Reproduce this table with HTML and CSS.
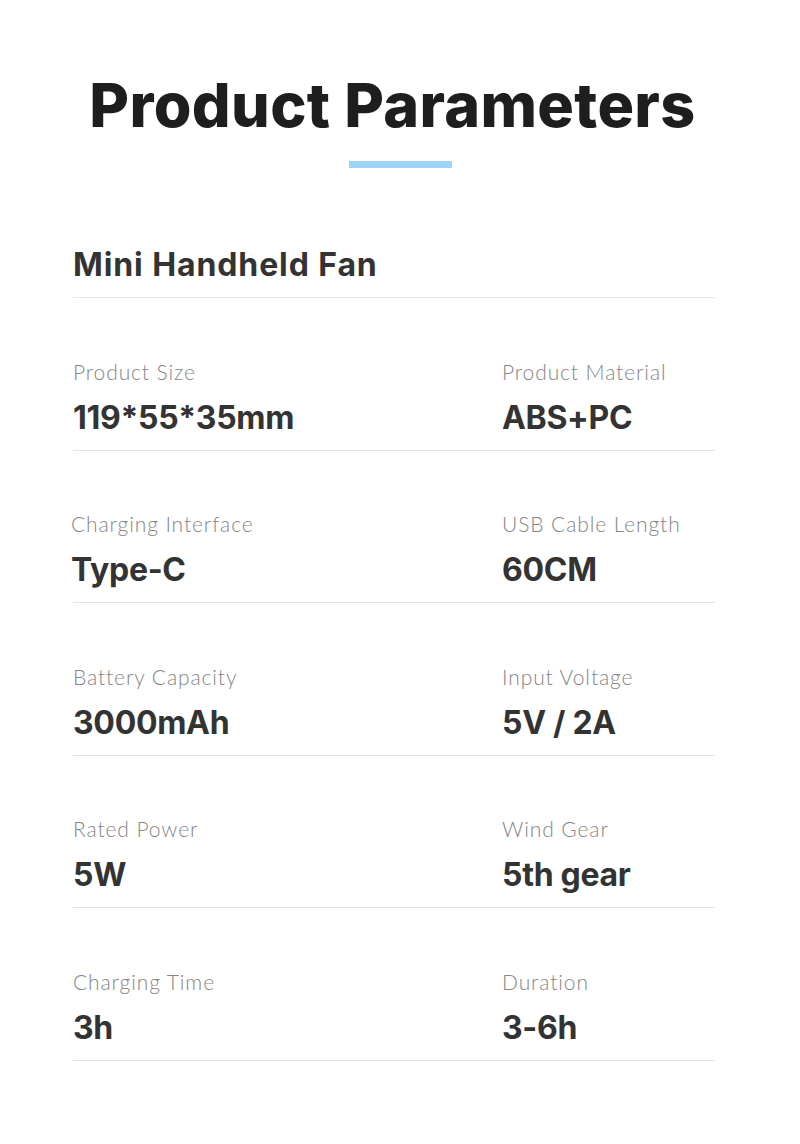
FILE: index.html
```html
<!DOCTYPE html>
<html>
<head>
<meta charset="utf-8">
<link rel="stylesheet" href="styles.css">
</head>
<body>
<div class="page">
  <header class="header">
    <h1 class="title">Product Parameters</h1>
    <div class="bar"></div>
  </header>
  <section class="specs">
    <h2 class="name">Mini Handheld Fan</h2>
    <div class="row">
      <div class="cell"><div class="label">Product Size</div><div class="value">119*55*35mm</div></div>
      <div class="cell"><div class="label">Product Material</div><div class="value">ABS+PC</div></div>
    </div>
    <div class="row">
      <div class="cell shift"><div class="label">Charging Interface</div><div class="value">Type-C</div></div>
      <div class="cell"><div class="label">USB Cable Length</div><div class="value">60CM</div></div>
    </div>
    <div class="row">
      <div class="cell"><div class="label">Battery Capacity</div><div class="value">3000mAh</div></div>
      <div class="cell"><div class="label">Input Voltage</div><div class="value">5V / 2A</div></div>
    </div>
    <div class="row">
      <div class="cell"><div class="label">Rated Power</div><div class="value">5W</div></div>
      <div class="cell"><div class="label">Wind Gear</div><div class="value">5th gear</div></div>
    </div>
    <div class="row">
      <div class="cell"><div class="label">Charging Time</div><div class="value">3h</div></div>
      <div class="cell"><div class="label">Duration</div><div class="value">3-6h</div></div>
    </div>
  </section>
</div>
</body>
</html>
```
FILE: styles.css
```css
* { box-sizing: border-box; }
html, body { margin: 0; padding: 0; background: #fff; }
body { font-family: "Inter", "Liberation Sans", sans-serif; }
.page { width: 800px; height: 1144px; }
.header {
  padding-top: 69px;
  display: flex;
  flex-direction: column;
  align-items: center;
}
.title {
  margin: 0 15px 0 0;
  font-size: 61px;
  line-height: 72px;
  font-weight: 800;
  color: #1e1e1e;
  letter-spacing: 0.35px;
}
.bar {
  width: 103px;
  height: 7px;
  margin-top: 20px;
  background: #9dd5f6;
}
.specs {
  margin-left: 73px;
  width: 642px;
  margin-top: 77px;
}
.name {
  margin: 0;
  font-size: 32px;
  line-height: 40px;
  font-weight: 700;
  letter-spacing: 0.9px;
  color: #333;
  padding-bottom: 12px;
  border-bottom: 1px solid #e8e8e8;
}
.row {
  display: grid;
  grid-template-columns: 429px 1fr;
  padding-top: 61.6px;
  padding-bottom: 12px;
  border-bottom: 1px solid #e3e3e3;
}
.cell.shift { margin-left: -2px; }
.label {
  font-family: "Lato", sans-serif;
  font-weight: 300;
  font-size: 21px;
  line-height: 24px;
  letter-spacing: 0.9px;
  color: #858585;
}
.value {
  margin-top: 14px;
  font-size: 32px;
  line-height: 40px;
  font-weight: 700;
  letter-spacing: -0.3px;
  color: #333;
}
```
